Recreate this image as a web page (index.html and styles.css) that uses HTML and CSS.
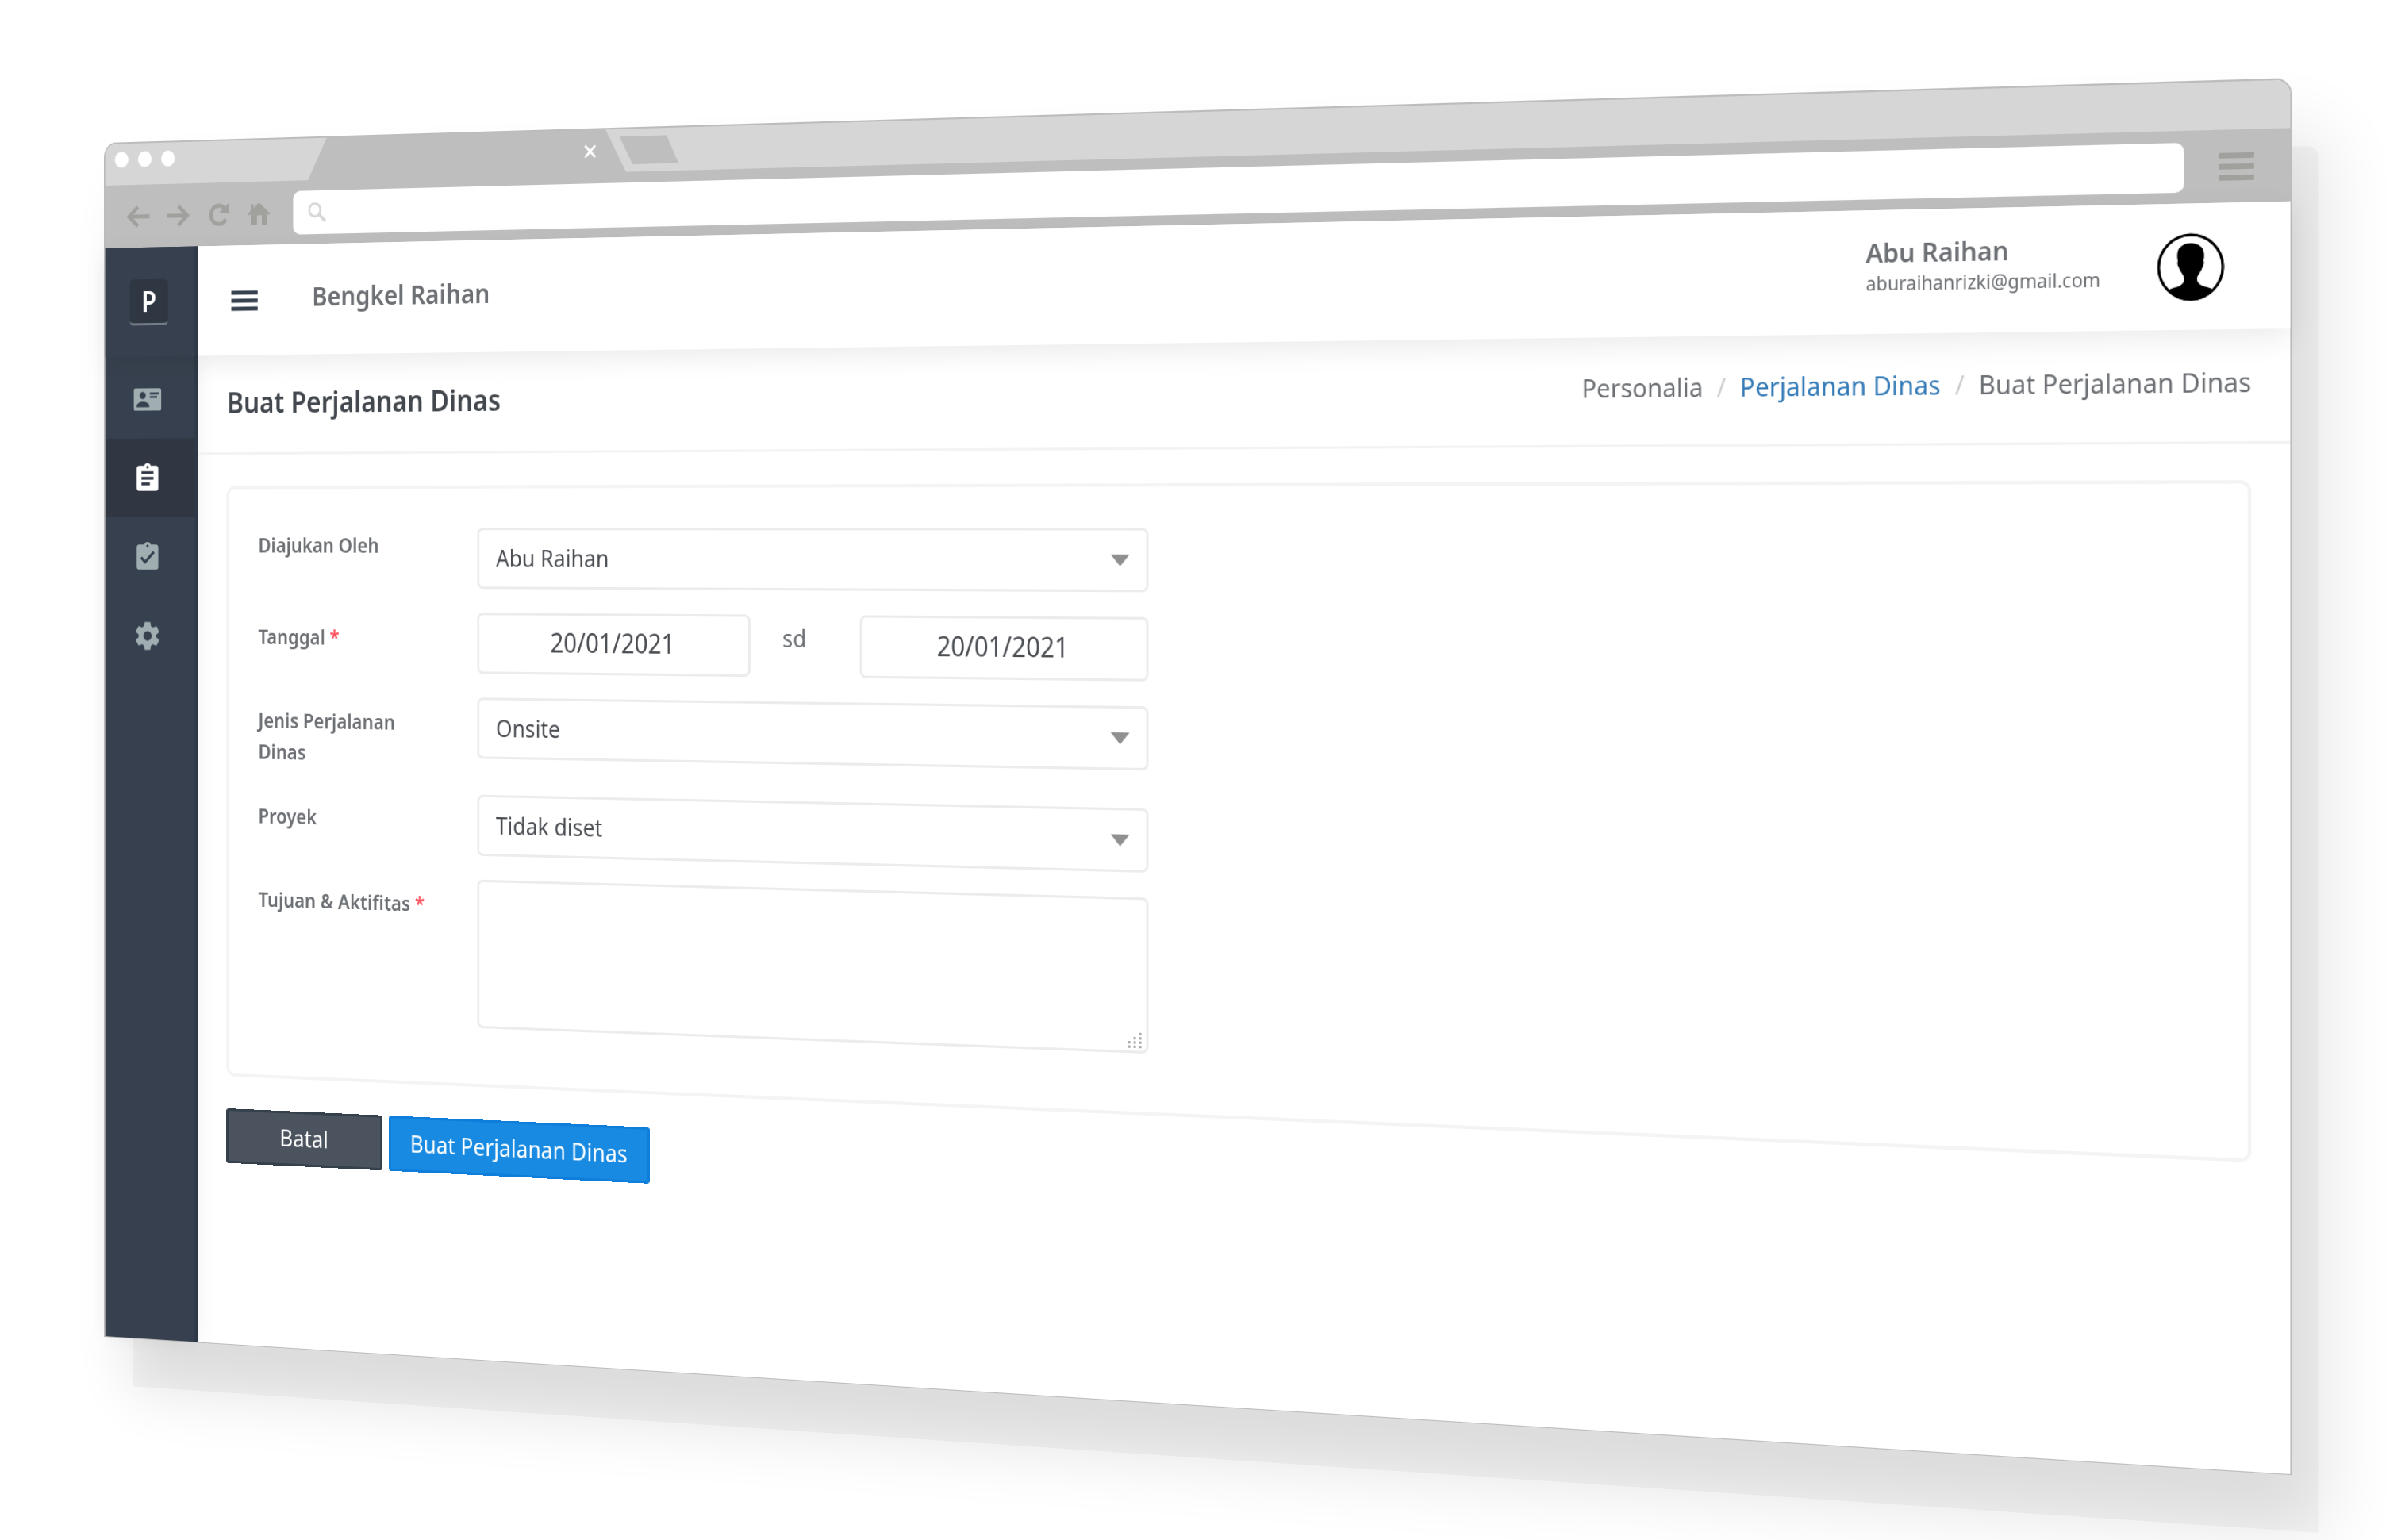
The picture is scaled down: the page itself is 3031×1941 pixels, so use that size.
FILE: index.html
```html
<!DOCTYPE html>
<html lang="id">
<head>
<meta charset="utf-8">
<meta name="viewport" content="width=device-width, initial-scale=1">
<title>Buat Perjalanan Dinas</title>
<link rel="stylesheet" href="styles.css">
</head>
<body>
<div class="stage">
  <div class="window">
    <div class="tabstrip">
      <div class="dots"><span class="dot"></span><span class="dot"></span><span class="dot"></span></div>
      <div class="tab">
        <svg class="tab-close" viewBox="0 0 18 18" aria-hidden="true"><path d="M2 2l14 14M16 2L2 16" stroke="#fff" stroke-width="3" fill="none"/></svg>
      </div>
      <div class="newtab"></div>
    </div>
    <div class="toolbar">
      <div class="nav-icons">
        <svg viewBox="0 0 34 28" aria-hidden="true"><path d="M17 2L4 14l13 12M4 14h30" fill="none" stroke="#a0a09d" stroke-width="5"/></svg>
        <svg viewBox="0 0 34 28" aria-hidden="true"><path d="M17 2l13 12-13 12M30 14H0" fill="none" stroke="#a0a09d" stroke-width="5"/></svg>
        <svg viewBox="0 0 34 28" aria-hidden="true"><path d="M27 20a11.500 11.500 0 1 1-2-14" fill="none" stroke="#a0a09d" stroke-width="5"/><path d="M31 0v12H17z" fill="#a0a09d"/></svg>
        <svg viewBox="0 0 34 28" aria-hidden="true"><path d="M16 0l16 14-2 2-2-2v14h-8V16h-7v12H4V14l-2 2-2-2 4-4V2h4v5z" fill="#a0a09d"/></svg>
      </div>
      <div class="address">
        <svg class="search" viewBox="0 0 28 24" aria-hidden="true"><circle cx="11" cy="9" r="8" fill="none" stroke="#d6d6d6" stroke-width="3"/><path d="M16 14l10 9" stroke="#d6d6d6" stroke-width="4"/></svg>
      </div>
      <svg class="browser-menu" viewBox="0 0 38 32" aria-hidden="true"><path d="M0 4h38M0 16h38M0 28h38" stroke="#a0a09d" stroke-width="6"/></svg>
    </div>

    <div class="app">
      <header class="appbar">
        <a class="brand" href="#"><span class="brand-mark">P</span></a>
        <button class="menu-toggle" type="button" aria-label="Menu">
          <svg viewBox="0 0 38 26"><path d="M0 3h38M0 13h38M0 23h38" stroke="#36404e" stroke-width="5"/></svg>
        </button>
        <span class="company">Bengkel Raihan</span>
        <div class="user">
          <div class="user-text">
            <div class="user-name">Abu Raihan</div>
            <div class="user-mail">aburaihanrizki@gmail.com</div>
          </div>
          <svg class="avatar" viewBox="0 0 74 74" aria-hidden="true">
            <circle cx="37" cy="37" r="35" fill="#fff" stroke="#000" stroke-width="3"/>
            <path d="M37 11c5 0 10 2 13 6 2 4 2 9 1 13 1 3 0 5-1 7-1 3-2 4-3 6-2 3-3 4-3 7 0 4 3 6 7 8 4 1 9 2 11 5a35 35 0 0 1-50 0c2-3 7-4 11-5 4-2 7-4 7-8 0-3-1-4-3-7-1-2-2-3-3-6-1-2-2-4-1-7-1-4-1-9 1-13 3-4 8-6 13-6z" fill="#000"/>
          </svg>
        </div>
      </header>

      <div class="body">
        <nav class="sidebar">
          <a href="#" aria-label="Personalia"><svg viewBox="0 0 24 24"><path fill="#a0aeb2" fill-rule="evenodd" d="M2 4h20a1.500 1.500 0 0 1 1.500 1.500v13A1.500 1.500 0 0 1 22 20H2a1.500 1.500 0 0 1-1.500-1.500v-13A1.500 1.500 0 0 1 2 4zm6 2.500a2.600 2.600 0 1 0 0 5.200 2.600 2.600 0 0 0 0-5.200zM3 17.500h10.500v-1c0-2-3.500-3-5.300-3S3 14.500 3 16.500zM14 7v1.500h7.500V7zm0 2.500V11h6V9.500z"/></svg></a>
          <a href="#" class="active" aria-label="Perjalanan Dinas"><svg viewBox="0 0 24 24"><path fill="#fff" d="M19 3h-4.200a3 3 0 0 0-5.600 0H5a2 2 0 0 0-2 2v14a2 2 0 0 0 2 2h14a2 2 0 0 0 2-2V5a2 2 0 0 0-2-2zm-7 0a1 1 0 1 1 0 2 1 1 0 0 1 0-2zm2 14H7v-2h7zm3-4H7v-2h10zm0-4H7V7h10z"/></svg></a>
          <a href="#" aria-label="Persetujuan"><svg viewBox="0 0 24 24"><path fill="#a0aeb2" d="M19 3h-4.200a3 3 0 0 0-5.600 0H5a2 2 0 0 0-2 2v14a2 2 0 0 0 2 2h14a2 2 0 0 0 2-2V5a2 2 0 0 0-2-2zm-7 0a1 1 0 1 1 0 2 1 1 0 0 1 0-2zm-2 14l-4-4 1.400-1.400L10 14.200l6.600-6.600L18 9z"/></svg></a>
          <a href="#" aria-label="Pengaturan"><svg viewBox="0 0 24 24"><path fill="#a0aeb2" d="M12 15.500A3.500 3.500 0 1 1 12 8.500a3.500 3.500 0 0 1 0 7m7.430-2.530c.04-.32.07-.64.07-.97s-.03-.66-.07-1l2.110-1.630c.19-.15.24-.42.120-.64l-2-3.460c-.12-.22-.39-.31-.61-.22l-2.490 1c-.52-.39-1.060-.73-1.690-.98l-.37-2.650A.506.506 0 0 0 14 2h-4c-.25 0-.46.180-.5.420l-.37 2.650c-.63.250-1.170.590-1.690.980l-2.490-1c-.22-.09-.49 0-.61.220l-2 3.460c-.13.220-.07.490.120.640L4.570 11c-.04.340-.07.670-.07 1s.03.650.07.970l-2.110 1.660c-.19.150-.25.420-.12.640l2 3.460c.12.220.390.300.610.220l2.490-1.010c.52.400 1.060.740 1.690.990l.370 2.650c.04.240.250.420.500.420h4c.25 0 .46-.18.500-.42l.370-2.650c.63-.26 1.170-.59 1.690-.99l2.490 1.010c.22.080.490 0 .61-.22l2-3.460c.12-.22.070-.49-.12-.64z"/></svg></a>
        </nav>

        <main class="main">
          <div class="titlebar">
            <h1>Buat Perjalanan Dinas</h1>
            <ol class="breadcrumb">
              <li>Personalia</li>
              <li><a href="#">Perjalanan Dinas</a></li>
              <li>Buat Perjalanan Dinas</li>
            </ol>
          </div>

          <form class="form">
            <div class="card">
              <label class="static" for="oleh">Diajukan Oleh</label>
              <select id="oleh" class="control"><option>Abu Raihan</option></select>

              <label for="mulai">Tanggal <span class="req">*</span></label>
              <div class="range">
                <input id="mulai" class="control date" type="text" value="20/01/2021">
                <label class="sd" for="selesai">sd</label>
                <input id="selesai" class="control date" type="text" value="20/01/2021">
              </div>

              <label for="jenis">Jenis Perjalanan Dinas</label>
              <select id="jenis" class="control"><option>Onsite</option></select>

              <label for="proyek">Proyek</label>
              <select id="proyek" class="control"><option>Tidak diset</option></select>

              <label for="tujuan">Tujuan &amp; Aktifitas <span class="req">*</span></label>
              <textarea id="tujuan" class="control"></textarea>
            </div>
            <div class="actions">
              <button class="btn btn-dark" type="button">Batal</button>
              <button class="btn btn-primary" type="submit">Buat Perjalanan Dinas</button>
            </div>
          </form>
        </main>
      </div>
    </div>
  </div>
</div>
</body>
</html>
```
FILE: styles.css
```css
* { box-sizing: border-box; }

body {
  margin: 0;
  background: #fff;
  color: #6c6f73;
  font-family: "Noto Sans", "Open Sans", sans-serif;
  font-size: 29px;
}

a { color: inherit; text-decoration: none; }
svg { display: block; flex: none; }

/* The window is turned about its left edge, right side towards the viewer. */
.stage {
  display: flex;
  min-height: 100vh;
  padding: 180px 142px 256px 131px;
  overflow: hidden;
  perspective: 325vw;
  perspective-origin: 131px 661px;
}

.window {
  flex: 1;
  display: flex;
  flex-direction: column;
  min-width: 0;
  border: 2px solid #bcbcbc;
  border-bottom-width: 1px;
  border-radius: 18px 18px 0 0;
  background: #fff;
  box-shadow: 35px 67px 0 -7px rgba(0, 0, 0, .04), 34px 60px 80px rgba(0, 0, 0, .11);
  transform: rotateY(-31.3deg);
  transform-origin: 0 0;
}

/* Browser chrome */
.tabstrip {
  display: flex;
  height: 52px;
  background: #d6d6d6;
  border-radius: 16px 16px 0 0;
}

.dots { display: flex; gap: 14px; width: 294px; padding: 10px 0 0 14px; }
.dot { width: 20px; height: 20px; border-radius: 50%; background: #fff; }

.tab {
  display: flex;
  align-items: center;
  justify-content: flex-end;
  width: 444px;
  padding-right: 40px;
  background: #bebebe;
  clip-path: polygon(27px 0, 416px 0, 444px 100%, 0 100%);
}
.tab-close { width: 18px; height: 18px; }

.newtab {
  width: 80px;
  height: 34px;
  margin: 9px 0 0 -9px;
  background: #bebebe;
  clip-path: polygon(0 0, 64px 0, 80px 100%, 18px 100%);
}

.toolbar {
  display: flex;
  align-items: center;
  height: 79px;
  padding: 0 39px 0 31px;
  background: #bebebe;
}
.nav-icons { display: flex; gap: 25px; width: 242px; }
.nav-icons svg { width: 34px; height: 28px; }
.address {
  flex: 1;
  display: flex;
  align-items: center;
  height: 54px;
  padding-left: 20px;
  border-radius: 10px;
  background: #fff;
}
.search { width: 28px; height: 24px; }
.browser-menu { width: 38px; height: 32px; margin-left: 38px; }

/* Application: the dark rail runs behind the header and the sidebar */
.app {
  flex: 1;
  display: flex;
  flex-direction: column;
  background: linear-gradient(90deg, #37404e 131px, #2e3846 131px, #2e3846 136px, #fff 136px);
}

.appbar {
  position: relative;
  z-index: 1;
  display: flex;
  align-items: center;
  height: 137px;
  padding-right: 71px;
  background: linear-gradient(90deg, #37404e 131px, #2e3846 131px, #2e3846 136px, #fff 136px);
  box-shadow: 0 10px 30px rgba(0, 0, 0, .08);
}
.brand {
  display: flex;
  align-items: center;
  width: 136px;
  padding-left: 36px;
}
.brand-mark {
  width: 56px;
  height: 58px;
  border-radius: 6px;
  background: #2f3742;
  border-bottom: 3px solid #747b84;
  color: #fff;
  font-size: 36px;
  font-weight: 600;
  line-height: 56px;
  text-align: center;
}
.menu-toggle { padding: 0; margin-left: 48px; border: 0; background: none; }
.menu-toggle svg { width: 38px; height: 26px; }
.company { margin-left: 78px; padding-bottom: 8px; font-size: 33px; font-weight: 600; }

.user { display: flex; align-items: center; gap: 62px; margin-left: auto; }
.user-text { padding-bottom: 14px; }
.user-name { font-weight: 600; line-height: 40px; }
.user-mail { font-size: 21px; line-height: 29px; }
.avatar { width: 74px; height: 74px; }

.body { flex: 1; display: flex; }

.sidebar {
  width: 136px;
  padding-top: 4px;
  border-right: 5px solid #2e3846;
  box-shadow: 0 0 30px rgba(0, 0, 0, .06);
}
.sidebar a {
  display: flex;
  align-items: center;
  justify-content: center;
  height: 99px;
  padding-right: 8px;
}
.sidebar .active { background: #303743; }
.sidebar svg { width: 42px; height: 42px; }

.main { flex: 1; min-width: 0; }

.titlebar {
  display: flex;
  align-items: center;
  justify-content: space-between;
  height: 124px;
  padding: 0 42px 4px;
  border-bottom: 3px solid #f3f3f3;
}
h1 { margin: 0; color: #43484e; font-size: 36px; font-weight: 600; }
.breadcrumb { display: flex; margin: 0; padding: 0 0 4px; list-style: none; }
.breadcrumb li + li::before { content: "/"; padding: 0 16px; color: #ccc; }
.breadcrumb a { color: #337ab7; }

.form { padding: 39px 42px 0 41px; }

.card {
  display: grid;
  grid-template-columns: 260px minmax(0, 890px);
  gap: 29px 50px;
  align-items: start;
  padding: 48px 42px 68px;
  border: 4px solid #f4f4f4;
  border-radius: 12px;
}
.card > label { padding-top: 12px; font-size: 25px; font-weight: 600; line-height: 39px; }
.card > .static { padding-top: 2px; }
.req { color: #ff4d5a; }

.control {
  width: 100%;
  height: 75px;
  margin: 0;
  padding: 0 23px 3px;
  border: 3px solid #ececec;
  border-radius: 8px;
  background-color: #fff;
  color: #4a4d52;
  font-family: inherit;
  font-size: 29px;
}
select.control {
  appearance: none;
  background-image: url("data:image/svg+xml,%3Csvg xmlns='http://www.w3.org/2000/svg' viewBox='0 0 24 14'%3E%3Cpath d='M0 0h24L12 14z' fill='%23909090'/%3E%3C/svg%3E");
  background-repeat: no-repeat;
  background-position: right 21px top 28px;
  background-size: 24px 14px;
}
textarea.control {
  display: block;
  height: 182px;
  resize: none;
  background-image: url("data:image/svg+xml,%3Csvg xmlns='http://www.w3.org/2000/svg' viewBox='0 0 18 18'%3E%3Cpath d='M14 0h3v3h-3zM14 5h3v3h-3zM14 10h3v3h-3zM14 15h3v3h-3zM7 5h3v3h-3zM7 10h3v3h-3zM7 15h3v3h-3zM0 10h3v3h-3zM0 15h3v3h-3z' fill='%23aaa'/%3E%3C/svg%3E");
  background-repeat: no-repeat;
  background-position: right 5px bottom 3px;
  background-size: 18px 18px;
}

.range { display: grid; grid-template-columns: 1fr 145px 1fr; }
input.date { padding-bottom: 5px; font-size: 32px; text-align: center; }
.sd { padding: 8px 0 0 43px; line-height: 39px; }

.actions { display: flex; gap: 9px; margin-top: 40px; }
.btn {
  min-width: 223px;
  height: 68px;
  padding: 0 30px 4px;
  border: 0;
  border-radius: 4px;
  color: #fff;
  font-family: inherit;
  font-size: 29px;
}
.btn-dark { background: #4b535f; box-shadow: inset 0 0 0 3px #35404d; }
.btn-primary { background: #188ae2; box-shadow: inset 0 0 0 3px #0f7edb; }
```
